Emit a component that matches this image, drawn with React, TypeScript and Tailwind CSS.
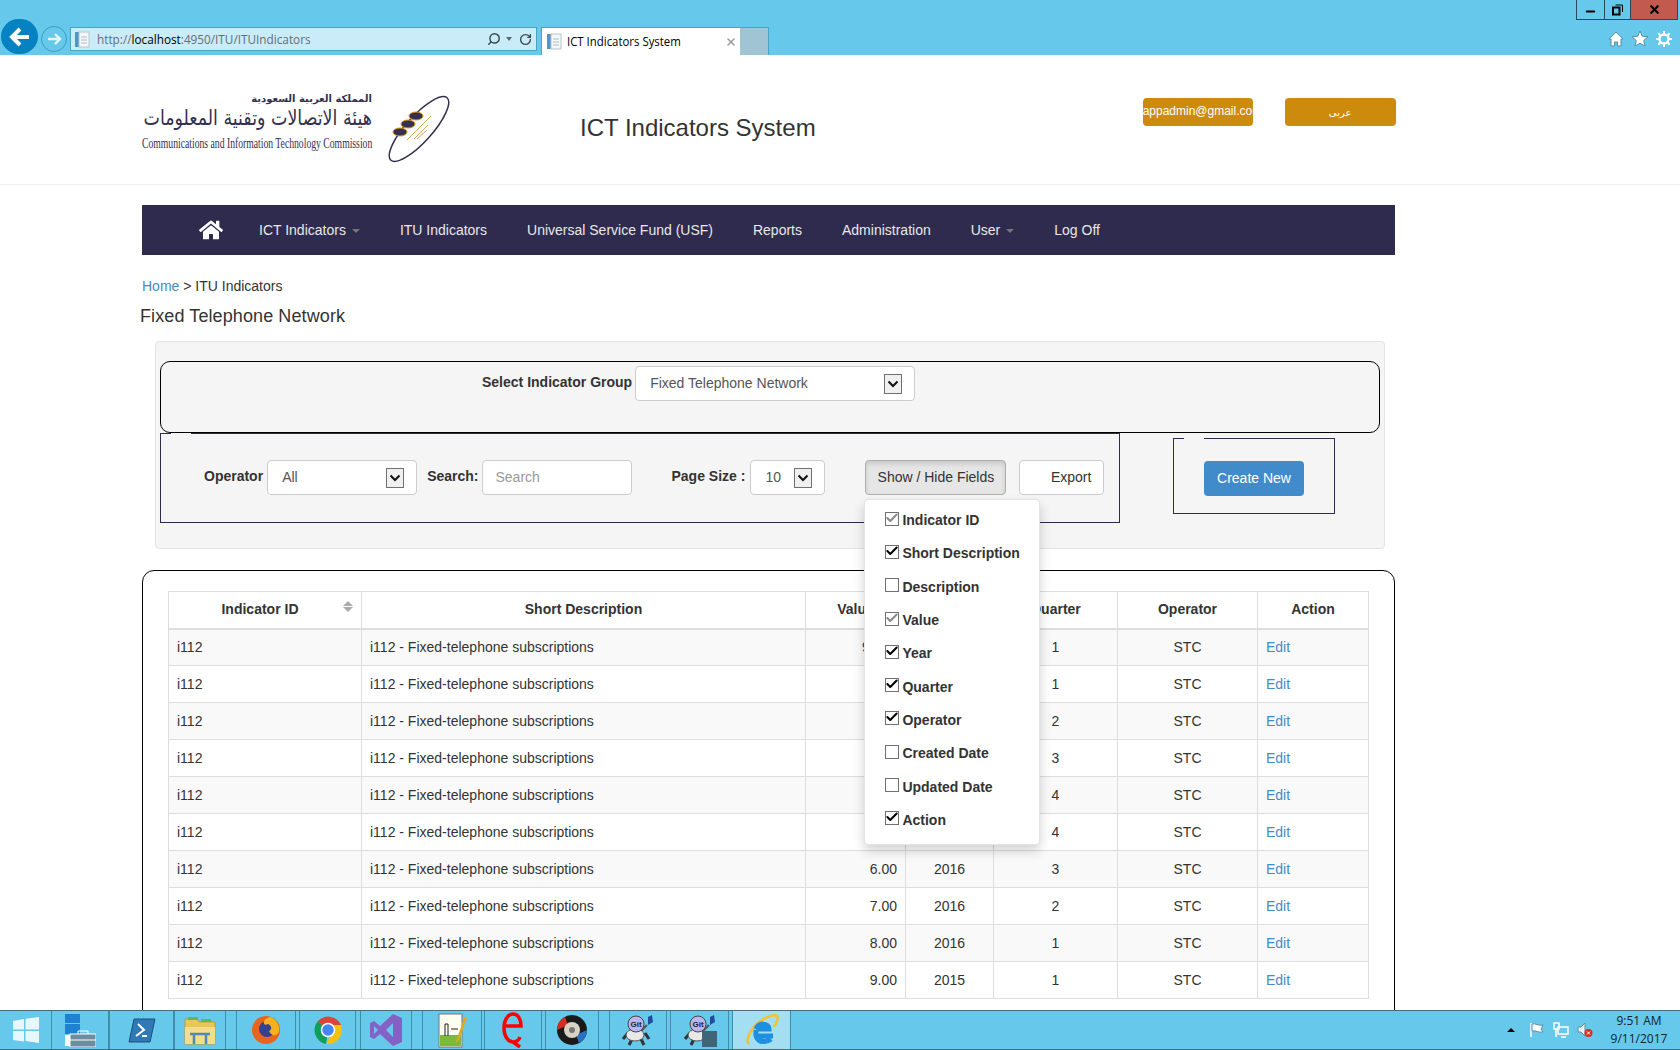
import { Check, RotateCw, Search, Minus, X } from "lucide-react";
import { FaHome } from "react-icons/fa";

const rows = [
  ["90.00", "2018", "1"],
  ["1.00", "2018", "1"],
  ["2.00", "2017", "2"],
  ["3.00", "2017", "3"],
  ["4.00", "2017", "4"],
  ["5.00", "2016", "4"],
  ["6.00", "2016", "3"],
  ["7.00", "2016", "2"],
  ["8.00", "2016", "1"],
  ["9.00", "2015", "1"],
];

const fields = [
  { name: "Indicator ID", state: "locked" },
  { name: "Short Description", state: "on" },
  { name: "Description", state: "off" },
  { name: "Value", state: "locked" },
  { name: "Year", state: "on" },
  { name: "Quarter", state: "on" },
  { name: "Operator", state: "on" },
  { name: "Created Date", state: "off" },
  { name: "Updated Date", state: "off" },
  { name: "Action", state: "on" },
];

function PageGlyph() {
  return (
    <svg width="16" height="17" viewBox="0 0 16 17" className="shrink-0">
      <rect x="1" y="1" width="5" height="15" fill="#4f93cf" />
      <rect x="5" y="1" width="10" height="15" fill="#f4f7f9" stroke="#b8c4cc" />
      <path d="M7 6h6M7 9h6M7 12h6" stroke="#b3bfc7" />
    </svg>
  );
}

function SelectBox({ label, className }: { label: string; className: string }) {
  return (
    <div className={`flex h-[35px] shrink-0 items-center justify-between rounded border border-[#ccc] bg-white pl-[14px] text-[14px] font-normal text-[#555] ${className}`}>
      <span>{label}</span>
      <span className="flex h-[20px] w-[18px] items-center justify-center border border-[#707070] bg-[#f0f0f0]">
        <svg width="12" height="8" viewBox="0 0 12 8">
          <path d="M1.5 1.5 6 6l4.5-4.5" fill="none" stroke="#111" strokeWidth="2" />
        </svg>
      </span>
    </div>
  );
}

function FieldRow({ name, state }: { name: string; state: string }) {
  return (
    <div className="flex h-[33.3px] items-center gap-[3px] text-[14px] font-bold text-[#333]">
      <span className="-mt-[4px] flex h-[14px] w-[14px] items-center justify-center border border-[#707070] bg-white">
        {state !== "off" && (
          <Check size={14} strokeWidth={3.5} className={`-mt-[2px] shrink-0 ${state === "locked" ? "text-[#8a8a8a]" : "text-black"}`} />
        )}
      </span>
      <span>{name}</span>
    </div>
  );
}

function BrowserBar() {
  return (
    <div className="flex h-[55px] shrink-0 bg-[#66c9eb] font-['Open_Sans',sans-serif]">
      <div className="flex items-end pb-[1px]">
        <div className="ml-[1px] flex h-[35px] w-[37px] items-center justify-center rounded-full bg-[#0582c2]">
          <svg width="22" height="20" viewBox="0 0 22 20">
            <path d="M11 2 3 10l8 8M3 10h17" fill="none" stroke="#fff" strokeWidth="4" />
          </svg>
        </div>
        <div className="mb-[2px] ml-[3px] flex h-[26px] w-[26px] items-center justify-center rounded-full border border-[#3f9dbd]">
          <svg width="16" height="14" viewBox="0 0 16 14">
            <path d="M9 2l5 5-5 5M14 7H2" fill="none" stroke="#e6f6fb" strokeWidth="2.4" />
          </svg>
        </div>
      </div>
      <div className="ml-[3px] mt-[27px] flex h-[24px] w-[467px] items-center border border-[#4aa3bf] bg-[#c9ecf8] pl-[3px] pr-[4px] text-[12px] text-[#5f6f78]">
        <PageGlyph />
        <span className="ml-[7px] mt-[2px] origin-left scale-x-[0.98] whitespace-nowrap">
          http://<span className="text-black">localhost</span>:4950/ITU/ITUIndicators
        </span>
        <Search size={14} className="ml-auto -scale-x-100 text-[#3a4a52]" strokeWidth={2.5} />
        <span className="ml-[5px] h-0 w-0 border-x-[3px] border-t-[4px] border-x-transparent border-t-[#5a6a72]" />
        <RotateCw size={13} className="ml-[7px] text-[#3a4a52]" strokeWidth={2.5} />
      </div>
      <div className="ml-[4px] mt-[27px] flex h-[28px] w-[199px] items-center border-l border-t border-[#4aa3bf] bg-white pl-[4px] pr-[3px] text-[12px] text-black">
        <PageGlyph />
        <span className="ml-[5px] mt-[1px] origin-left scale-x-[0.95] whitespace-nowrap">ICT Indicators System</span>
        <X size={12} className="ml-auto text-[#9a9a9a]" strokeWidth={3} />
      </div>
      <div className="mt-[27px] h-[28px] w-[29px] border-r border-t border-[#4aa3bf] bg-[#a0c4d4]" />
      <div className="ml-auto flex flex-col items-end">
        <div className="mr-[2px] flex h-[20px] border-x border-b border-[#2b4a57]">
          <div className="flex w-[28px] items-center justify-center border-r border-[#2b4a57]">
            <Minus size={13} strokeWidth={3.5} className="mt-[3px] text-black" />
          </div>
          <div className="flex w-[26px] items-center justify-center border-r border-[#2b4a57]">
            <svg width="11" height="12" viewBox="0 0 11 12">
              <path d="M3.5 1h7v7" fill="none" stroke="#000" />
              <rect x="1" y="3.5" width="6.5" height="7" fill="none" stroke="#000" strokeWidth="2" />
            </svg>
          </div>
          <div className="flex w-[46px] items-center justify-center bg-[#c35a50]">
            <X size={13} strokeWidth={4} className="text-black" />
          </div>
        </div>
        <div className="mr-[8px] mt-[10px] flex items-center gap-[7px]">
          <svg width="16" height="16" viewBox="0 0 16 16">
            <path d="M8 1 1 8h2v7h3.5v-4h3v4H13V8h2z" fill="#fff" stroke="#5b8ea3" />
          </svg>
          <svg width="18" height="17" viewBox="0 0 18 17">
            <path d="M9 1l2.3 5.2 5.7.5-4.3 3.8 1.3 5.6L9 13.2 4 16.100l1.300-5.600L1 6.700l5.700-.5z" fill="#fff" stroke="#5b8ea3" />
          </svg>
          <svg width="16" height="16" viewBox="0 0 16 16">
            <circle cx="8" cy="8" r="4.500" fill="none" stroke="#fff" strokeWidth="2.400" />
            <path d="M8 0v3M8 13v3M0 8h3M13 8h3M2.300 2.300l2.100 2.100M11.600 11.600l2.100 2.100M13.700 2.300l-2.100 2.100M4.400 11.600l-2.100 2.100" stroke="#fff" strokeWidth="2" />
          </svg>
        </div>
      </div>
    </div>
  );
}

function SiteHeader() {
  return (
    <header className="flex h-[130px] shrink-0 border-b border-[#eee] pl-[142px]">
      <div className="mt-[38px] w-[230px] text-[#34304f]">
        <div dir="rtl" className="h-[12px] font-['DejaVu_Sans',sans-serif] text-[10px] font-bold leading-[12px]">
          المملكة العربية السعودية
        </div>
        <div dir="rtl" className="h-[27px] origin-right scale-x-[0.83] whitespace-nowrap font-['DejaVu_Sans',sans-serif] text-[21px] leading-[27px]">
          هيئة الاتصالات وتقنية المعلومات
        </div>
        <div className="mt-[3px] h-[17px] origin-left scale-x-[0.645] whitespace-nowrap font-['Liberation_Serif',serif] text-[15px] leading-[17px]">
          Communications and Information Technology Commission
        </div>
      </div>
      <svg className="ml-[13px] mt-[40px]" width="68" height="68" viewBox="0 0 68 68">
        <ellipse cx="34" cy="34" rx="42" ry="13" transform="rotate(-48 34 34)" fill="none" stroke="#34304f" strokeWidth="1.500" />
        <ellipse cx="31" cy="21" rx="7" ry="4" fill="#34304f" stroke="#d99a1c" />
        <ellipse cx="23" cy="29" rx="7" ry="4" fill="#34304f" stroke="#d99a1c" />
        <ellipse cx="15" cy="37" rx="7" ry="4" fill="#34304f" stroke="#d99a1c" />
        <path d="M22 45 46 21M29 44 43 30M32 44 42 35" fill="none" stroke="#d3a960" />
      </svg>
      <div className="ml-[127px] mt-[59px] font-['Liberation_Sans',sans-serif] text-[24px] leading-[28px] text-[#333]">ICT Indicators System</div>
      <div className="ml-[327px] mt-[43px] flex h-[28px] w-[110px] justify-start overflow-hidden rounded-sm bg-[#cc8b0c] whitespace-nowrap font-['Liberation_Sans',sans-serif] text-[12px] leading-[27px] text-white">
        appadmin@gmail.com
      </div>
      <div className="ml-[32px] mt-[43px] flex h-[28px] w-[111px] items-center justify-center rounded-sm bg-[#cc8b0c] font-['DejaVu_Sans',sans-serif] text-[10px] text-white">
        عربى
      </div>
    </header>
  );
}

function NavBar() {
  const items = [
    { name: "ICT Indicators", caret: true },
    { name: "ITU Indicators" },
    { name: "Universal Service Fund (USF)" },
    { name: "Reports" },
    { name: "Administration" },
    { name: "User", caret: true },
    { name: "Log Off" },
  ];
  return (
    <nav className="mt-[20px] flex h-[50px] w-[1253px] items-center bg-[#2f2b4e] pl-[57px] text-[14px] text-[#e8e8e8]">
      <FaHome size={24} className="mr-[36px] text-white" />
      {items.map((item) => (
        <a key={item.name} className="mr-[40px] flex items-center">
          {item.name}
          {item.caret && <span className="ml-[6px] mt-[2px] h-0 w-0 border-x-[4px] border-t-[4px] border-x-transparent border-t-[#777]" />}
        </a>
      ))}
    </nav>
  );
}

function FilterPanel() {
  return (
    <div className="ml-[13px] mt-[14px] h-[208px] w-[1230px] rounded border border-[#e3e3e3] bg-[#f5f5f5] pl-[4px] pt-[19px]">
      <div className="flex h-[72px] w-[1220px] items-start rounded-[10px] border border-black pl-[321px] pt-[4px]">
        <span className="mr-[3px] mt-[6px] text-[14px] font-bold text-[#333]">Select Indicator Group</span>
        <SelectBox label="Fixed Telephone Network" className="w-[280px] pr-[12px]" />
      </div>
      <div className="flex items-start">
        <fieldset className="h-[90px] w-[960px] shrink-0 border border-[#2f2b4e] pl-[43px] pt-[26px]">
          <legend className="-ml-[33px] h-[1px] w-[20px]" />
          <div className="flex items-start whitespace-nowrap text-[14px] font-bold text-[#333]">
            <span className="mr-[4px] mt-[6px]">Operator</span>
            <SelectBox label="All" className="w-[150px] pr-[12px]" />
            <span className="ml-[10px] mr-[4px] mt-[6px]">Search:</span>
            <div className="flex h-[35px] w-[150px] shrink-0 items-center rounded border border-[#ccc] bg-white pl-[12px] font-normal text-[#999]">Search</div>
            <span className="ml-[39px] mr-[5px] mt-[6px]">Page Size :</span>
            <SelectBox label="10" className="w-[75px] pr-[12px]" />
            <div className="relative ml-[40px] shrink-0">
              <div className="flex h-[35px] w-[141px] items-center justify-center rounded border border-[#adadad] bg-[#e6e6e6] font-normal text-[#333] shadow-[inset_0_3px_5px_rgba(0,0,0,0.125)]">
                Show / Hide Fields
              </div>
              <div className="absolute -left-[1px] top-[39px] z-10 h-[346px] w-[176px] rounded border border-[#e3e3e3] bg-white pl-[20px] pt-[4px] shadow-[0_6px_12px_rgba(0,0,0,0.175)]">
                {fields.map((f) => (
                  <FieldRow key={f.name} name={f.name} state={f.state} />
                ))}
              </div>
            </div>
            <div className="ml-[13px] flex h-[35px] w-[85px] shrink-0 items-center justify-end rounded border border-[#ccc] bg-white pr-[12px] font-normal text-[#333]">Export</div>
          </div>
        </fieldset>
        <fieldset className="ml-[53px] mt-[5px] h-[76px] w-[162px] border border-[#2f2b4e] pl-[30px] pt-[22px]">
          <legend className="-ml-[20px] h-[1px] w-[20px]" />
          <div className="flex h-[35px] w-[100px] items-center justify-center rounded bg-[#428bca] text-[14px] text-white">Create New</div>
        </fieldset>
      </div>
    </div>
  );
}

function DataTable() {
  const cell = "border border-[#ddd] px-[8px] font-normal";
  const head = "border border-[#ddd] border-b-2 px-[8px] font-bold text-center";
  return (
    <div className="mt-[21px] h-[460px] w-[1253px] rounded-t-[12px] border border-black px-[25px] pt-[20px]">
      <table className="w-[1200px] table-fixed border-collapse text-[14px] text-[#333]">
        <colgroup>
          <col className="w-[193px]" />
          <col className="w-[444px]" />
          <col className="w-[100px]" />
          <col className="w-[88px]" />
          <col className="w-[124px]" />
          <col className="w-[140px]" />
          <col className="w-[111px]" />
        </colgroup>
        <thead>
          <tr className="h-[37px]">
            <th className={`${head} relative pr-[18px]`}>
              Indicator ID
              <span className="absolute right-[8px] top-[9px] flex flex-col gap-[1px]">
                <span className="h-0 w-0 border-x-[5px] border-b-[5px] border-x-transparent border-b-[#aaa]" />
                <span className="h-0 w-0 border-x-[5px] border-t-[5px] border-x-transparent border-t-[#aaa]" />
              </span>
            </th>
            <th className={head}>Short Description</th>
            <th className={head}>Value</th>
            <th className={head}>Year</th>
            <th className={head}>Quarter</th>
            <th className={head}>Operator</th>
            <th className={head}>Action</th>
          </tr>
        </thead>
        <tbody>
          {rows.map((r, i) => (
            <tr key={i} className={`h-[37px] ${i % 2 === 0 ? "bg-[#f9f9f9]" : "bg-white"}`}>
              <td className={cell}>i112</td>
              <td className={cell}>i112 - Fixed-telephone subscriptions</td>
              <td className={`${cell} text-right`}>{r[0]}</td>
              <td className={`${cell} text-center`}>{r[1]}</td>
              <td className={`${cell} text-center`}>{r[2]}</td>
              <td className={`${cell} text-center`}>STC</td>
              <td className={cell}>
                <a className="text-[#428bca]">Edit</a>
              </td>
            </tr>
          ))}
        </tbody>
      </table>
    </div>
  );
}

function TaskButton({ width, active, children }: { width: string; active?: boolean; children: React.ReactNode }) {
  return (
    <div className={`flex h-full items-center justify-center border-x border-[#3f8ea8] ${width} ${active ? "bg-[#a3def3]" : ""}`}>
      {children}
    </div>
  );
}

function GitTurtle() {
  return (
    <svg width="34" height="34" viewBox="0 0 34 34">
      <path d="M7 20 2 26M24 20l4 6M11 26l-3 6M20 26l3 6" stroke="#333" strokeWidth="3" />
      <path d="M27 4l4-2 1 7-5 3z" fill="#1f4c9c" />
      <path d="M26 12 20 18" stroke="#555" strokeWidth="2" />
      <ellipse cx="14" cy="22" rx="9" ry="6" fill="#e8e8e8" stroke="#555" />
      <circle cx="15" cy="11" r="8" fill="#b9b7ee" stroke="#444" />
      <text x="15" y="14" textAnchor="middle" fontSize="8" fontWeight="700" fontFamily="Liberation Sans" fill="#222">Git</text>
    </svg>
  );
}

function Taskbar() {
  return (
    <div className="flex h-[40px] shrink-0 items-center border-y border-[#4f6b78] bg-[#66c9eb] font-['Open_Sans',sans-serif]">
      <div className="flex h-full w-[51px] items-center justify-center">
        <svg width="28" height="28" viewBox="0 0 28 28">
          <path d="M1 5l11-2v10.500H1zM13.500 2.800 27 1v12.500H13.500zM1 15h11v10.500L1 24zM13.500 15H27v12l-13.500-2z" fill="#e8f7fc" />
        </svg>
      </div>
      <TaskButton width="w-[58px]">
        <svg width="32" height="34" viewBox="0 0 32 34">
          <rect x="1" y="1" width="15" height="9" fill="#1f82d0" />
          <rect x="1" y="11" width="15" height="10" fill="#1f82d0" />
          <rect x="1" y="22" width="15" height="11" fill="#fff" />
          <rect x="6" y="21" width="26" height="13" fill="#6d8c9f" stroke="#fff" />
          <path d="M14 21v-3h10v3M6 27h26" fill="none" stroke="#fff" />
        </svg>
      </TaskButton>
      <TaskButton width="w-[65px]">
        <svg width="28" height="28" viewBox="0 0 28 28">
          <path d="M6 3h21l-5 23H1z" fill="#2f79b5" stroke="#1c4f7c" />
          <path d="M10 8l6 6-8 6M14 20h5" fill="none" stroke="#fff" strokeWidth="2" />
        </svg>
      </TaskButton>
      <TaskButton width="w-[52px]">
        <svg width="32" height="30" viewBox="0 0 32 30">
          <path d="M1 4h12l2 3h16v22H1z" fill="#e7c65c" stroke="#c19b2e" />
          <path d="M4 2h10v3H4zM17 4h10v3H17z" fill="#5fb860" />
          <path d="M1 12h30v17H1z" fill="#f4dd8a" />
          <path d="M10 29V19h12v10M6 19h20" fill="none" stroke="#4f8ab5" strokeWidth="2.500" />
        </svg>
      </TaskButton>
      <div className="w-[10px]" />
      <TaskButton width="w-[60px]">
        <svg width="30" height="32" viewBox="0 0 30 32">
          <circle cx="15" cy="16" r="14" fill="#e8641f" />
          <circle cx="16" cy="15" r="8" fill="#35418f" />
          <path d="M20 3c7 4 9 10 8 15-4 6-8 3-10-1 4-2 2-6-1-7-3 2-5 0-4-3 2-3 5-4 7-4z" fill="#f6b11d" />
        </svg>
      </TaskButton>
      <div className="w-[3px]" />
      <TaskButton width="w-[57px]">
        <svg width="30" height="30" viewBox="0 0 30 30">
          <path d="M15 15 4.500 6.500A14 14 0 0 1 28 10H15z" fill="#db4437" />
          <path d="M15 15 4.500 6.500A14 14 0 0 0 13 28.900z" fill="#0f9d58" />
          <path d="M15 10h13a14 14 0 0 1-15 18.900L19 18z" fill="#f4c20d" />
          <circle cx="15" cy="15" r="6.500" fill="#4285f4" stroke="#fff" strokeWidth="1.500" />
        </svg>
      </TaskButton>
      <div className="w-[4px]" />
      <TaskButton width="w-[52px]">
        <svg width="32" height="34" viewBox="0 0 32 34">
          <path d="M23 1l9 4v24l-9 4-13-12-6 5-4-2V10l4-2 6 5zM23 10l-7 7 7 7zM4 13v8l4-4z" fill="#8661c5" />
        </svg>
      </TaskButton>
      <div className="w-[10px]" />
      <TaskButton width="w-[60px]">
        <svg width="30" height="36" viewBox="0 0 30 36">
          <rect x="2" y="2" width="23" height="33" fill="#fdfdf0" stroke="#777" />
          <rect x="3" y="23" width="21" height="11" fill="#7cb83e" />
          <path d="M8 24V12h3v12M14 17h7" fill="none" stroke="#222" />
          <path d="M28 4 20 26l-1 5 3-3 8-22z" fill="#e8a61d" />
        </svg>
      </TaskButton>
      <div className="w-[2px]" />
      <TaskButton width="w-[58px]">
        <svg width="22" height="36" viewBox="0 0 22 36">
          <path d="M3 14h16c0-7-3-12-8-12S2 8 2 16s4 14 9 14c3 0 6-2 7-5M11 30l7 5" fill="none" stroke="#f00" strokeWidth="3.500" />
        </svg>
      </TaskButton>
      <div className="w-[3px]" />
      <TaskButton width="w-[54px]">
        <svg width="32" height="32" viewBox="0 0 32 32">
          <circle cx="16" cy="16" r="15" fill="#1a1a1a" />
          <path d="M1 16a15 15 0 0 1 8-13l3 8z" fill="#d62d20" />
          <path d="M31 16a15 15 0 0 1-8 13l-3-8z" fill="#2b6fc4" />
          <circle cx="16" cy="16" r="8" fill="#d8d3c4" />
          <circle cx="16" cy="16" r="3" fill="#777" />
        </svg>
      </TaskButton>
      <div className="w-[10px]" />
      <TaskButton width="w-[58px]">
        <GitTurtle />
      </TaskButton>
      <div className="w-[3px]" />
      <TaskButton width="w-[59px]">
        <div className="relative h-[34px] w-[34px]">
          <GitTurtle />
          <span className="absolute bottom-0 right-0 h-[16px] w-[15px] bg-[#3f6677]" />
        </div>
      </TaskButton>
      <div className="w-[3px]" />
      <TaskButton width="w-[59px]" active>
        <svg width="34" height="34" viewBox="0 0 34 34">
          <path d="M4 31c-4-3 1-15 10-22 8-6 16-8 18-6 2 3-1 8-3 11" fill="none" stroke="#f2c230" strokeWidth="2.500" />
          <path d="M28 23H12c1 6 9 7 14 3M11 16h13c0-6-11-7-13 0" fill="none" stroke="#1f8fe0" strokeWidth="5" />
          <path d="M11 17c-1 6 1 10 6 12" fill="none" stroke="#1f8fe0" strokeWidth="5" />
        </svg>
      </TaskButton>
      <div className="ml-auto flex items-center">
        <span className="mr-[14px] h-0 w-0 border-x-[4px] border-b-[4px] border-x-transparent border-b-black" />
        <svg width="16" height="16" viewBox="0 0 16 16">
          <path d="M2 1v14" stroke="#fff" strokeWidth="1.500" />
          <path d="M3 2c4-1 6 2 11 1l-2 4 2 3c-5 1-7-2-11-1z" fill="#fff" stroke="#5b8ea3" />
        </svg>
        <svg className="ml-[8px]" width="16" height="16" viewBox="0 0 16 16">
          <rect x="1" y="1" width="5" height="6" fill="none" stroke="#fff" strokeWidth="1.500" />
          <rect x="5" y="5" width="10" height="7" fill="none" stroke="#fff" strokeWidth="1.500" />
          <path d="M3 7v8M8 15h5" stroke="#fff" strokeWidth="1.500" />
        </svg>
        <svg className="ml-[8px]" width="16" height="16" viewBox="0 0 16 16">
          <path d="M1 5h3l4-4v13L4 10H1z" fill="#e8f4f8" stroke="#6a8a98" />
          <circle cx="11.500" cy="11" r="4" fill="#d62d20" />
          <path d="M10 9.500l3 3m0-3-3 3" stroke="#fff" />
        </svg>
        <div className="ml-[15px] mr-[10px] w-[62px] text-center text-[12px] leading-[18px] text-[#10242c]">
          <div>9:51 AM</div>
          <div>9/11/2017</div>
        </div>
      </div>
    </div>
  );
}

export default function App() {
  return (
    <div className="flex h-screen w-full flex-col overflow-hidden bg-white font-['Liberation_Sans',sans-serif]">
      <BrowserBar />
      <SiteHeader />
      <main className="min-h-0 flex-1 overflow-hidden pl-[142px]">
        <NavBar />
        <div className="mt-[21px] h-[20px] text-[14px] leading-[20px] text-[#333]">
          <a className="text-[#428bca]">Home</a> &gt; ITU Indicators
        </div>
        <h2 className="-ml-[2px] mt-[9px] h-[22px] text-[18px] leading-[22px] tracking-[0.1px] text-[#333]">Fixed Telephone Network</h2>
        <FilterPanel />
        <DataTable />
      </main>
      <Taskbar />
    </div>
  );
}
